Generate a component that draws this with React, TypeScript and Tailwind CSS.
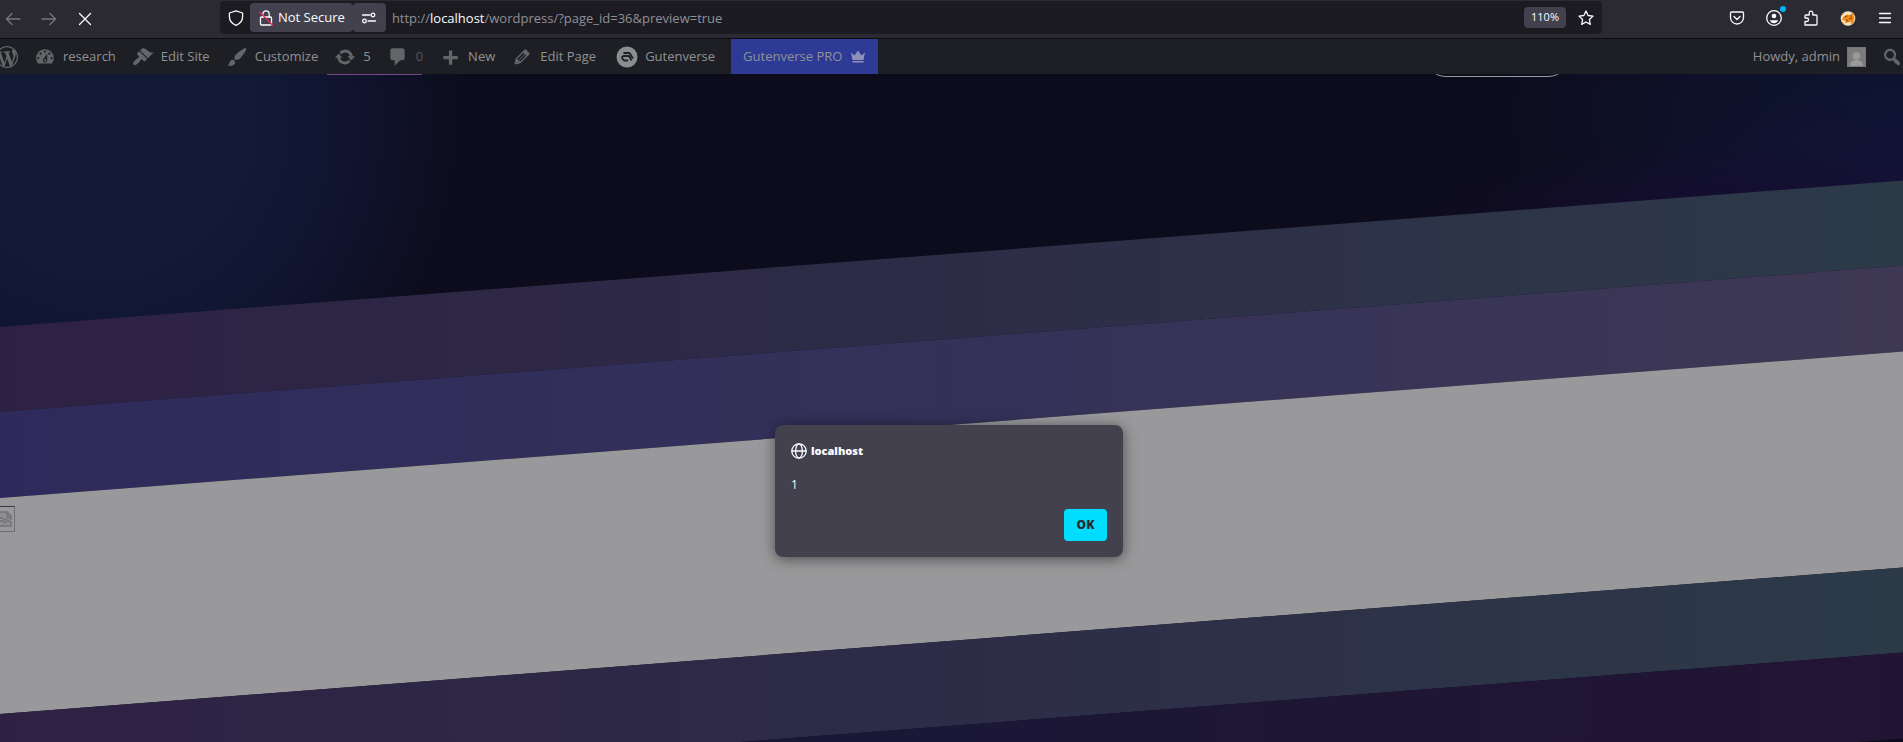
import React from "react";
import clsx from "clsx";

const DASHICONS = {
  wordpress:
    "M20 10c0-5.51-4.49-10-10-10C4.48 0 0 4.49 0 10c0 5.52 4.48 10 10 10 5.51 0 10-4.48 10-10zM7.78 15.37L4.37 6.22c.55-.02 1.17-.08 1.17-.08.5-.06.44-1.13-.06-1.11 0 0-1.45.11-2.37.11-.18 0-.37 0-.58-.01C4.12 2.69 6.87 1.11 10 1.11c2.33 0 4.45.87 6.05 2.34-.68-.11-1.65.39-1.65 1.58 0 .74.45 1.36.9 2.1.35.61.55 1.36.55 2.46 0 1.49-1.4 5-1.4 5l-3.03-8.37c.54-.02.82-.17.82-.17.5-.05.44-1.25-.06-1.22 0 0-1.44.12-2.38.12-.87 0-2.33-.12-2.33-.12-.5-.03-.56 1.2-.06 1.22l.92.08 1.26 3.41zM17.41 10c.24-.64.74-1.87.43-4.25.7 1.29 1.05 2.71 1.05 4.25 0 3.29-1.73 6.24-4.4 7.78.97-2.59 1.94-5.2 2.92-7.78zM6.1 18.09C3.12 16.65 1.11 13.53 1.11 10c0-1.3.23-2.48.72-3.59C3.25 10.3 4.67 14.2 6.1 18.09zm4.03-6.63l2.58 6.98c-.86.29-1.76.45-2.71.45-.79 0-1.57-.11-2.29-.33.81-2.38 1.62-4.74 2.42-7.1z",
  dashboard:
    "M3.76 16h12.48c1.1-1.37 1.76-3.11 1.76-5 0-4.42-3.58-8-8-8s-8 3.58-8 8c0 1.89.66 3.63 1.76 5zM10 4c.55 0 1 .45 1 1s-.45 1-1 1-1-.45-1-1 .45-1 1-1zM6 6c.55 0 1 .45 1 1s-.45 1-1 1-1-.45-1-1 .45-1 1-1zm8 0c.55 0 1 .45 1 1s-.45 1-1 1-1-.45-1-1 .45-1 1-1zm-5.37 5.55L12 7v6c0 1.1-.9 2-2 2s-2-.9-2-2c0-.57.24-1.08.63-1.45zM4 10c.55 0 1 .45 1 1s-.45 1-1 1-1-.45-1-1 .45-1 1-1zm12 0c.55 0 1 .45 1 1s-.45 1-1 1-1-.45-1-1 .45-1 1-1zm-5 3c0-.55-.45-1-1-1s-1 .45-1 1 .45 1 1 1 1-.45 1-1z",
  appearance:
    "M14.48 11.06L7.41 3.99l1.5-1.5c.5-.56 2.3-.47 3.51.32 1.21.8 1.43 1.28 2.91 2.1 1.18.64 2.45 1.26 4.45.85zm-.71.71L6.7 4.7 4.93 6.47c-.39.39-.39 1.02 0 1.41l1.06 1.06c.39.39.39 1.03 0 1.42-.6.6-1.43 1.11-2.21 1.69-.35.26-.7.53-1.01.84C1.43 14.23.4 16.08 1.4 17.07c.99 1 2.84-.03 4.18-1.36.31-.31.58-.66.85-1.02.57-.78 1.08-1.61 1.69-2.21.39-.39 1.02-.39 1.41 0l1.06 1.06c.39.39 1.02.39 1.41 0z",
  customizer:
    "M18.33 3.57s.27-.8-.31-1.36c-.53-.52-1.22-.24-1.22-.24-.61.3-5.76 3.47-7.67 5.57-.86.96-2.06 3.79-1.09 4.82.92.98 3.96-.17 4.79-1 2.06-2.06 5.21-7.17 5.5-7.79zM1.4 17.65c2.37-1.56 1.46-3.41 3.23-4.64.93-.65 2.22-.62 3.08.29.63.67.8 2.57-.16 3.46-1.57 1.45-4 1.55-6.15.89z",
  update:
    "M10.2 3.28c3.53 0 6.43 2.61 6.92 6h2.08l-3.5 4-3.5-4h2.32c-.45-1.97-2.21-3.45-4.32-3.45-1.45 0-2.73.71-3.54 1.78L4.95 5.66C6.23 4.2 8.11 3.28 10.2 3.28zm-.4 13.44c-3.52 0-6.43-2.61-6.92-6H.8l3.5-4c1.17 1.33 2.33 2.67 3.5 4H5.48c.45 1.97 2.21 3.45 4.32 3.45 1.45 0 2.73-.71 3.54-1.78l1.71 1.95c-1.28 1.46-3.15 2.38-5.25 2.38z",
  comments:
    "M5 2h9c1.1 0 2 .9 2 2v7c0 1.1-.9 2-2 2h-2l-5 5v-5H5c-1.1 0-2-.9-2-2V4c0-1.1.9-2 2-2z",
  plus: "M17 9v3h-5v5H9v-5H4V9h5V4h3v5h5z",
  edit: "M13.89 3.39l2.71 2.72c.46.46.42 1.24.03 1.64l-8.01 8.02-5.56 1.16 1.16-5.58s7.6-7.63 7.99-8.03c.39-.39 1.22-.39 1.68.07zm-2.73 2.79l-5.59 5.61 1.11 1.11 5.54-5.65zm-2.97 8.23l5.58-5.6-1.07-1.08-5.59 5.6z",
  search:
    "M12.14 4.18c1.87 1.87 2.11 4.75.72 6.89.12.1.22.21.36.31.2.16.47.36.81.59.34.24.56.39.66.47.42.31.73.57.94.78.32.32.6.65.84 1 .25.35.44.69.59 1.04.14.35.21.68.18 1-.02.32-.14.59-.36.81s-.49.34-.81.36c-.31.02-.65-.04-.99-.19-.35-.14-.7-.34-1.04-.59-.35-.24-.68-.52-1-.84-.21-.21-.47-.52-.77-.93-.1-.13-.25-.35-.47-.66-.22-.32-.4-.57-.56-.78-.16-.2-.29-.35-.44-.5-2.07 1.09-4.69.76-6.44-.98-2.14-2.15-2.14-5.64 0-7.78 2.15-2.15 5.63-2.15 7.78 0zm-1.41 6.36c1.36-1.37 1.36-3.58 0-4.95-1.37-1.37-3.59-1.37-4.95 0-1.37 1.37-1.37 3.58 0 4.95 1.36 1.37 3.58 1.37 4.95 0z",
};

type DashiconName = keyof typeof DASHICONS;

const Dashicon: React.FC<{ name: DashiconName }> = ({ name }) => (
  <svg
    viewBox="0 0 20 20"
    className="size-[22px] shrink-0 fill-[#646569]"
    aria-hidden="true"
  >
    <path d={DASHICONS[name]} />
  </svg>
);

interface ChromeIconProps {
  children: React.ReactNode;
  className?: string;
}

// 16px line icons used by the browser toolbar
const ChromeIcon: React.FC<ChromeIconProps> = ({ children, className }) => (
  <svg
    viewBox="0 0 16 16"
    fill="none"
    stroke="currentColor"
    strokeWidth="1.3"
    strokeLinecap="round"
    strokeLinejoin="round"
    className={clsx("size-4 shrink-0", className)}
    aria-hidden="true"
  >
    {children}
  </svg>
);

const BrowserToolbar = () => (
  <div className="flex h-[39px] shrink-0 items-start border-b border-[#0c0c0d] bg-[#2b2a33] pt-px pr-2.5 pl-[5px] text-[#fbfbfe]">
    <div className="flex h-[35px] items-center gap-5">
      <button aria-label="Back" className="text-[#76757d]">
        <ChromeIcon>
          <path d="M15 8H1.5M7 2.500 1.5 8 7 13.500" />
        </ChromeIcon>
      </button>
      <button aria-label="Forward" className="text-[#76757d]">
        <ChromeIcon>
          <path d="M1 8h13.500M9 2.500 14.500 8 9 13.500" />
        </ChromeIcon>
      </button>
      <button aria-label="Stop">
        <ChromeIcon>
          <path d="m2.500 2.500 11 11M13.500 2.500l-11 11" />
        </ChromeIcon>
      </button>
    </div>

    <div className="ml-[127px] flex h-[33px] flex-1 items-center rounded bg-[#1c1b22] pr-2 pl-2">
      <button aria-label="Tracking protection" className="mr-1.5">
        <ChromeIcon>
          <path d="M8 .8 14.600 3v3.500c0 4-2.300 7.200-6.600 8.800C3.700 13.700 1.400 10.500 1.400 6.500V3z" />
        </ChromeIcon>
      </button>
      <button className="flex h-[29px] items-center gap-1 rounded bg-[#42414d] px-2 text-[13px]">
        <ChromeIcon>
          <rect x="2.500" y="7" width="11" height="8" rx="1" />
          <path d="M4.800 7V4a3.200 3.200 0 0 1 6.400 0v3" />
          <path d="M1.500 2 14.500 15" stroke="#e22850" />
        </ChromeIcon>
        Not Secure
      </button>
      <button
        aria-label="Permissions"
        className="flex h-[29px] w-[33px] items-center justify-center rounded bg-[#42414d]"
      >
        <ChromeIcon>
          <path d="M1.500 5h7.500M7 11h7.500" />
          <circle cx="12" cy="5" r="1.800" />
          <circle cx="3.500" cy="11" r="1.800" />
        </ChromeIcon>
      </button>
      <div className="ml-1.5 flex-1 pt-0.5 text-[13px] text-[#8f8f96]">
        http://<span className="text-[#fbfbfe]">localhost</span>
        /wordpress/?page_id=36&amp;preview=true
      </div>
      <button className="h-[21px] rounded-sm bg-[#42414d] px-[7px] text-[11px]">
        110%
      </button>
      <button aria-label="Bookmark" className="ml-3">
        <ChromeIcon>
          <path d="m8 1 2.100 4.500 4.900.6-3.600 3.400.9 4.900L8 12l-4.300 2.400.9-4.900L1 6.100l4.900-.6z" />
        </ChromeIcon>
      </button>
    </div>

    <div className="ml-[127px] flex h-[34px] items-center gap-[21px]">
      <button aria-label="Save to Pocket">
        <ChromeIcon>
          <path d="M2.500 2h11c.6 0 1 .4 1 1v4.500a6.500 6.500 0 0 1-13 0V3c0-.6.4-1 1-1z" />
          <path d="M5 6.500l3 3 3-3" />
        </ChromeIcon>
      </button>
      <button aria-label="Account" className="relative">
        <ChromeIcon>
          <circle cx="8" cy="8" r="7.300" />
          <circle cx="8" cy="6" r="2.300" fill="currentColor" stroke="none" />
          <path
            d="M3.800 10.200h8.400c-.8 2-2.300 3-4.200 3s-3.400-1-4.200-3z"
            fill="currentColor"
            stroke="none"
          />
        </ChromeIcon>
        <span className="absolute -top-1 -right-1 size-1.5 rounded-full bg-[#00b3f4]" />
      </button>
      <button aria-label="Extensions">
        <ChromeIcon>
          <path d="M2 15h11c.6 0 1-.4 1-1V6c0-.6-.4-1-1-1H9.800V3a1.800 1.800 0 0 0-3.600 0v2H3c-.6 0-1 .4-1 1v2h1.800a1.700 1.700 0 0 1 0 3.500H2z" />
        </ChromeIcon>
      </button>
      <button aria-label="FoxyProxy">
        <svg viewBox="0 0 16 16" className="size-4" aria-hidden="true">
          <circle cx="8" cy="8.500" r="7.300" fill="#f3e6cf" />
          <path
            d="M2 10 3 7l3.500-2.500 4 .5 2-3 1 3 1 3-1 4-3 2.500.5-3-4 1.500-2.500-.5 1-2z"
            fill="#f08a12"
          />
          <path d="M1.500 5.500 4 3M2 12l2 2M13.500 12l-2 2.500" stroke="#f08a12" />
          <path
            d="m5 7 2-1M9 9l3-1M6 10l2 .5M10 5.500l1.500 1"
            stroke="#7a3c08"
          />
        </svg>
      </button>
      <button aria-label="Menu">
        <ChromeIcon>
          <path d="M2.500 3.500h11M2.500 8h11M2.500 12.500h11" />
        </ChromeIcon>
      </button>
    </div>
  </div>
);

interface AdminItem {
  icon: DashiconName;
  label: string;
  muted?: boolean;
}

const adminItems: AdminItem[] = [
  { icon: "dashboard", label: "research" },
  { icon: "appearance", label: "Edit Site" },
  { icon: "customizer", label: "Customize" },
  { icon: "update", label: "5" },
  { icon: "comments", label: "0", muted: true },
  { icon: "plus", label: "New" },
  { icon: "edit", label: "Edit Page" },
];

const AdminBar = () => (
  <nav className="flex h-[35px] shrink-0 items-center overflow-hidden bg-[#1e1f24] text-[13px] text-[#909193]">
    <div className="-ml-1 flex items-center gap-4">
      <a href="#" aria-label="WordPress">
        <Dashicon name="wordpress" />
      </a>
      {adminItems.map((item) => (
        <a
          key={item.label}
          href="#"
          className={clsx(
            "flex items-center gap-[7px] whitespace-nowrap",
            item.muted && "text-[#56575b]"
          )}
        >
          <Dashicon name={item.icon} />
          {item.label}
        </a>
      ))}
      <a href="#" className="ml-1 flex items-center gap-[7px]">
        <svg viewBox="0 0 22 22" className="size-[22px]" aria-hidden="true">
          <circle cx="11" cy="11" r="10.500" fill="#8c8d8f" />
          <path
            d="M7.500 7h6l3.500 5.500M5.500 11.500l2-1.500h5.500l2.500 4.500M5.500 11.500 8 14.500h4"
            fill="none"
            stroke="#1e1f24"
            strokeWidth="1.800"
            strokeLinejoin="round"
          />
        </svg>
        Gutenverse
      </a>
    </div>
    <a
      href="#"
      className="ml-4 flex h-full items-center gap-2 bg-[#2d3b97] px-3 whitespace-nowrap"
    >
      Gutenverse PRO
      <svg viewBox="0 0 16 16" className="size-4 fill-[#8f92b8]" aria-hidden="true">
        <path d="M1 3.500 4.500 6.500 8 1.500l3.500 5L15 3.500 13.500 11h-11zM2.500 12h11v1.500h-11z" />
      </svg>
    </a>
    <a href="#" className="ml-auto flex items-center gap-[7px]">
      Howdy, admin
      <svg viewBox="0 0 19 20" className="h-5 w-[19px]" aria-hidden="true">
        <path d="M0 0h19v20H0z" fill="#757677" />
        <path d="M1 1h17v18H1z" fill="#7c7c7d" />
        <circle cx="9.500" cy="9" r="3.800" fill="#9a9a9b" />
        <path d="M3 19c0-4 2.500-6 6.500-6s6.500 2 6.500 6z" fill="#9a9a9b" />
      </svg>
    </a>
    <button aria-label="Search" className="ml-[15px]">
      <Dashicon name="search" />
    </button>
  </nav>
);

const PreviewPage = () => (
  <main className="relative min-h-0 flex-1 overflow-hidden bg-[#0d0c1c] bg-[radial-gradient(circle_370px_at_100px_50px,#121a38_0,#121a37_40%,#10142f_68%,#0d0c1c00_100%),radial-gradient(ellipse_300px_90px_at_90%_160px,#170c30_0,#170c3000_100%),radial-gradient(ellipse_320px_130px_at_100%_140px,#151238_0,#15123800_100%),radial-gradient(ellipse_440px_260px_at_100%_40px,#0e1533_0,#0d0c1c00_100%)]">
    {/* bottom edge of the site header, scrolled under the admin bar */}
    <div className="flex h-[253px] justify-between pr-[333px] pl-[327px]">
      <div className="h-px w-[95px] bg-[#734789]" />
      <div className="-mt-[41px] h-11 w-[146px] rounded-full border border-[#99999b]" />
    </div>

    <div className="origin-top-left -skew-y-[4.4deg]">
      <div className="h-[85px] bg-linear-to-r from-[#2e2144] via-[#2d2c47] to-[#2c3a48]" />
      <div className="h-[86px] bg-linear-to-r from-[#2e2b5c] via-[#343159] to-[#3e3854]" />
      <div className="h-[216px] bg-[#99999b]" />
      <div className="h-[85px] bg-linear-to-r from-[#2e2144] via-[#2d2c47] to-[#2c3a48]" />
      <div className="h-[86px] bg-linear-to-r from-[#14183a] via-[#1b1736] to-[#221434]" />
    </div>

    {/* image that failed to load */}
    <div className="absolute top-[432px] -left-1.5 flex h-[26px] w-[21px] items-center justify-center border border-[#6f6f72] border-t-[#3a3a3e]">
      <svg viewBox="0 0 16 16" className="size-4" aria-hidden="true">
        <path
          d="M1 7.500V1h9l4 4v3l-3-1-3 2-3-2zM1 11l4-1.500 3 2 3-2 3 1.500v4H1zM10 1v4h4"
          fill="#8f8f91"
          stroke="#747477"
          strokeWidth="1.500"
        />
      </svg>
    </div>
  </main>
);

const AlertDialog = () => (
  <div className="absolute inset-x-0 top-[425px] flex justify-center pr-[5px]">
    <div
      role="alertdialog"
      aria-labelledby="alert-origin"
      className="flex w-[348px] flex-col rounded-lg bg-[#42414d] p-4 text-[#fbfbfe] shadow-[0_2px_14px_rgba(0,0,0,0.5)]"
    >
      <div className="flex h-5 items-center gap-1">
        <ChromeIcon>
          <circle cx="8" cy="8" r="7.200" />
          <ellipse cx="8" cy="8" rx="3.400" ry="7.200" />
          <path d="M1 8h14" />
        </ChromeIcon>
        <h1 id="alert-origin" className="text-[11px] font-extrabold">
          localhost
        </h1>
      </div>
      <p className="mt-4 text-xs">1</p>
      <button className="mt-4 h-8 w-[43px] self-end rounded bg-[#00ddff] text-xs font-extrabold text-[#2b2a33]">
        OK
      </button>
    </div>
  </div>
);

const App = () => (
  <div className="relative flex h-screen flex-col overflow-hidden font-['Open_Sans',sans-serif]">
    <BrowserToolbar />
    <AdminBar />
    <PreviewPage />
    <AlertDialog />
  </div>
);

export default App;
